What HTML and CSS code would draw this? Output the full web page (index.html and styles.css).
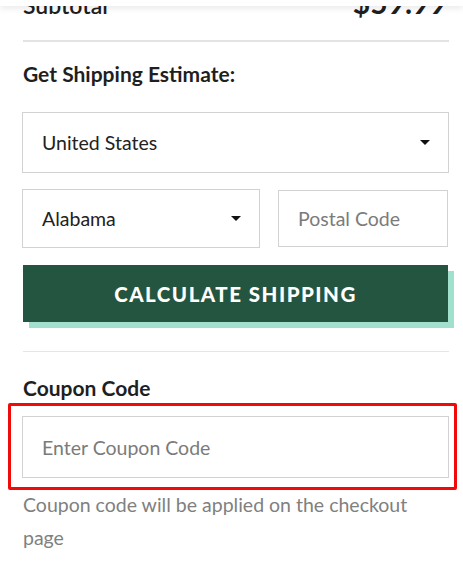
FILE: index.html
```html
<!DOCTYPE html>
<html lang="en">
<head>
<meta charset="utf-8">
<title>Cart summary</title>
<link rel="stylesheet" href="styles.css">
</head>
<body>
<div class="topbar"></div>
<main class="summary">
  <div class="subtotal">
    <span class="subtotal-label">Subtotal</span>
    <span class="subtotal-value">$59.99</span>
  </div>

  <section class="shipping">
    <h3 class="heading">Get Shipping Estimate:</h3>
    <div class="field select">
      <span>United States</span>
      <svg class="caret" width="10" height="5" viewBox="0 0 10 5"><path d="M0 0h10L5 5z" fill="#111"/></svg>
    </div>
    <div class="field-row">
      <div class="field select state">
        <span>Alabama</span>
        <svg class="caret" width="10" height="5" viewBox="0 0 10 5"><path d="M0 0h10L5 5z" fill="#111"/></svg>
      </div>
      <div class="field postal"><span class="placeholder">Postal Code</span></div>
    </div>
    <button class="btn">CALCULATE SHIPPING</button>
  </section>

  <section class="coupon">
    <h3 class="heading">Coupon Code</h3>
    <div class="coupon-wrap">
      <div class="field coupon-input"><span class="placeholder">Enter Coupon Code</span></div>
      <span class="highlight"></span>
    </div>
    <p class="note">Coupon code will be applied on the checkout page</p>
  </section>
</main>
</body>
</html>
```

FILE: styles.css
```css
* { box-sizing: border-box; }
html, body { margin: 0; padding: 0; background: #fff; }
body {
  font-family: Lato, "Open Sans", Arial, sans-serif;
  color: #1f1f1f;
  overflow: hidden;
  height: 578px;
}
.topbar {
  position: fixed;
  top: 0; left: 0; right: 0;
  height: 6px;
  background: #fff;
  box-shadow: 0 2px 6px rgba(0,0,0,0.10);
  z-index: 5;
}
.summary {
  padding: 0 14px 0 23px;
}
.subtotal {
  display: flex;
  justify-content: space-between;
  align-items: flex-end;
  margin-top: -14px;
  height: 56px;
  padding-bottom: 23px;
  border-bottom: 2px solid #e3e3e3;
}
.subtotal-label { font-size: 23px; font-weight: 600; line-height: 1; }
.subtotal-value { font-size: 30px; font-weight: 700; line-height: 1; margin-right: 2px; }

.heading {
  margin: 0;
  font-size: 21px;
  font-weight: 700;
  line-height: 22px;
  color: #1f1f1f;
}
.shipping { padding-top: 21px; padding-bottom: 29px; border-bottom: 1px solid #e6e6e6; }
.shipping .heading { margin-bottom: 27px; }
.field {
  display: flex;
  align-items: center;
  justify-content: space-between;
  border: 1px solid #d2d2d2;
  background: #fff;
  font-size: 19.5px;
  color: #222;
}
.select { height: 61px; padding: 0 18px 0 19px; margin-left: -1px; }
.field-row {
  display: flex;
  gap: 18px;
  margin-top: 16px;
  margin-left: -1px;
}
.field-row .select { margin-left: 0; }
.state { width: 238px; height: 59px; padding-right: 18px; }
.postal { width: 170px; height: 57px; margin-top: 1px; padding-left: 19px; }
.placeholder { color: #7b7b7b; }
.btn {
  display: block;
  width: 425px;
  height: 57px;
  margin-top: 17px;
  border: 0;
  background: #245540;
  color: #fff;
  font-family: inherit;
  font-size: 20.5px;
  font-weight: 900;
  letter-spacing: 1.5px;
  box-shadow: 6px 6px 0 #a0e0cc;
  cursor: pointer;
}
.coupon { padding-top: 25px; }
.coupon .heading { margin-bottom: 17px; }
.coupon-wrap { position: relative; margin-left: -1px; }
.coupon-input { height: 62px; padding-left: 19px; }
.highlight {
  position: absolute;
  top: -13px; left: -14px; right: -8px; bottom: -12px;
  border: 3px solid #f00a0a;
  border-radius: 2px;
  pointer-events: none;
}
.note {
  margin: 10px 0 0;
  font-size: 19.5px;
  line-height: 33px;
  color: #808080;
  padding-right: 20px;
}
```
